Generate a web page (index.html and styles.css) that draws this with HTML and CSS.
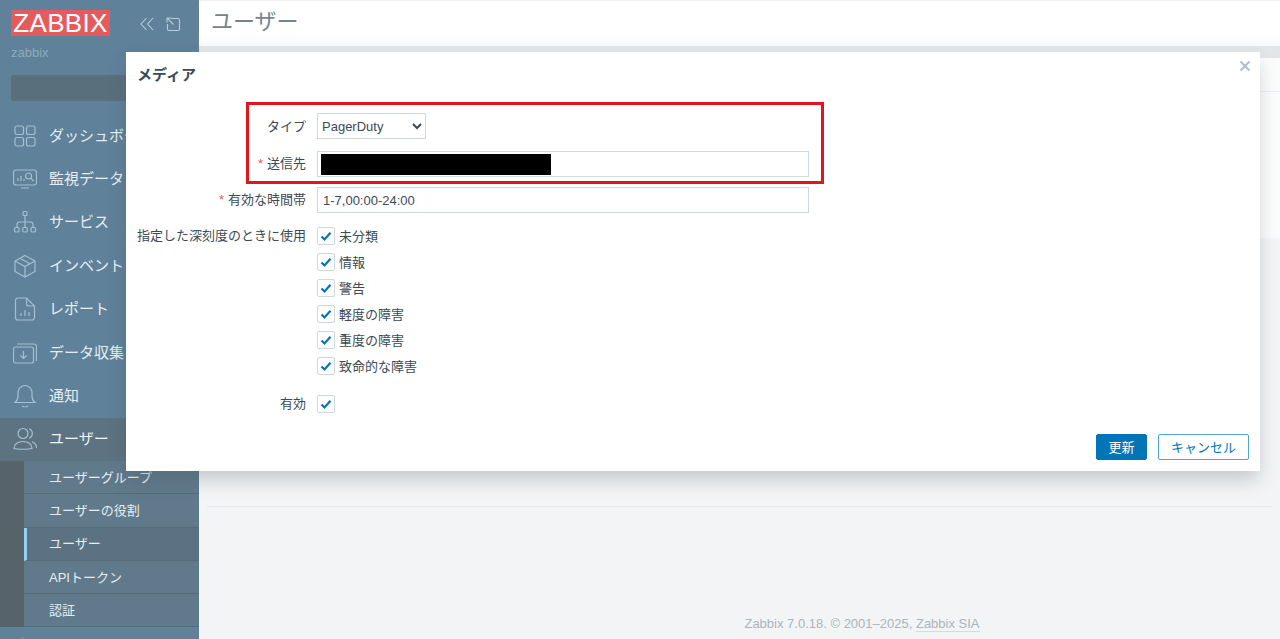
FILE: index.html
```html
<!DOCTYPE html>
<html lang="ja">
<head>
<meta charset="utf-8">
<title>ユーザー</title>
<link rel="stylesheet" href="styles.css">
</head>
<body>
<div class="app">
  <aside class="sidebar">
    <div class="brand">
      <span class="logo">ZABBIX</span>
      <div class="brand-tools">
        <svg class="tool" viewBox="0 0 16 16"><path d="M7.500 2 2 8l5.500 6M14 2 8.500 8l5.500 6"/></svg>
        <svg class="tool" viewBox="0 0 16 16"><path d="M6 2.500h7a1.500 1.500 0 0 1 1.500 1.500v9a1.500 1.500 0 0 1-1.500 1.500H4A1.500 1.500 0 0 1 2.500 13V8M2 2l6.500 6.500M2 2h4.500M2 2v4.500"/></svg>
      </div>
    </div>
    <div class="server">zabbix</div>
    <div class="search"></div>
    <nav class="menu">
      <a class="item"><svg class="ico" viewBox="0 0 24 24"><rect x="2" y="2" width="8.500" height="8.500" rx="2"/><rect x="13.500" y="2" width="8.500" height="8.500" rx="2"/><rect x="2" y="13.500" width="8.500" height="8.500" rx="2"/><rect x="13.500" y="13.500" width="8.500" height="8.500" rx="2"/></svg><span>ダッシュボード</span></a>
      <a class="item"><svg class="ico" viewBox="0 0 24 24"><rect x="0.500" y="3" width="23" height="15" rx="2.500"/><path d="M8 21h8M5 14v-3M8 14v-5M11 14v-2"/><circle cx="15.500" cy="9" r="3"/><path d="m18 11.500 2.500 2.500"/></svg><span>監視データ</span></a>
      <a class="item"><svg class="ico" viewBox="0 0 24 24"><rect x="10" y="1.500" width="4" height="4" rx="1"/><path d="M12 5.500V12M4 17v-2.500a2.500 2.500 0 0 1 2.500-2.500h11a2.500 2.500 0 0 1 2.500 2.500V17M12 12v5"/><rect x="1.500" y="17.500" width="4.500" height="4.500" rx="1"/><rect x="9.750" y="17.500" width="4.500" height="4.500" rx="1"/><rect x="18" y="17.500" width="4.500" height="4.500" rx="1"/></svg><span>サービス</span></a>
      <a class="item"><svg class="ico" viewBox="0 0 24 24"><path d="M12 1.500 22 7v10.500L12 23 2 17.500V7zM2 7l10 5.500L22 7M12 12.500V23M7 4.300l10 5.500"/></svg><span>インベントリ</span></a>
      <a class="item"><svg class="ico" viewBox="0 0 24 24"><path d="M13.500 1H5a2.500 2.500 0 0 0-2.500 2.500v17A2.500 2.500 0 0 0 5 23h14a2.500 2.500 0 0 0 2.500-2.500V9zM13.500 1v5.500A2.500 2.500 0 0 0 16 9h5.500M8 19v-3M12 19v-6M16 19v-4"/></svg><span>レポート</span></a>
      <a class="item"><svg class="ico" viewBox="0 0 24 24"><rect x="0.500" y="6" width="20" height="16" rx="2"/><path d="M4 3h17a2.500 2.500 0 0 1 2.500 2.500V20M10.500 10v7.500M7.500 14.500l3 3 3-3"/></svg><span>データ収集</span></a>
      <a class="item"><svg class="ico" viewBox="0 0 24 24"><path d="M2 18.500c2-1.500 3-3 3-6.500V8.500a7 7 0 0 1 14 0V12c0 3.500 1 5 3 6.500zM9 22c1.500 1 4.500 1 6 0"/></svg><span>通知</span></a>
      <a class="item item-open"><svg class="ico" viewBox="0 0 24 24"><circle cx="10" cy="6.500" r="5"/><path d="M1 21.500c0-4.500 4-7 9-7s9 2.500 9 7c-3 1-15 1-18 0zM16 1.800a5 5 0 0 1 0 9.400M19 14.800c2.500 1 4.500 3 4.500 6"/></svg><span>ユーザー</span></a>
      <div class="submenu">
        <a class="sub">ユーザーグループ</a>
        <a class="sub">ユーザーの役割</a>
        <a class="sub sub-active">ユーザー</a>
        <a class="sub">APIトークン</a>
        <a class="sub">認証</a>
      </div>
      <a class="item"><svg class="ico" viewBox="0 0 24 24"><circle cx="10" cy="6" r="4"/><path d="M4 22c0-5 4-7 8-7s8 2 8 7"/></svg></a>
    </nav>
  </aside>
  <main class="main">
    <header class="page-head"><h1>ユーザー</h1></header>
    <div class="band"></div>
    <section class="card"><div class="card-rule"></div></section>
    <div class="rest">
      <div class="rest-rule"></div>
      <footer class="foot">Zabbix 7.0.18. © 2001–2025, <a class="foot-link">Zabbix SIA</a></footer>
    </div>
  </main>
</div>

<div class="modal">
  <h2 class="modal-title">メディア</h2>
  <svg class="close" viewBox="0 0 12 12"><path d="M1.500 1.500l9 9M10.500 1.500l-9 9"/></svg>
  <div class="form">
    <div class="label">タイプ</div>
    <div class="ctrl first"><select class="select"><option>PagerDuty</option></select></div>
    <div class="label"><i>*</i>送信先</div>
    <div class="ctrl secret-wrap"><input class="input" type="text" value=""><span class="secret"></span></div>
    <div class="label"><i>*</i>有効な時間帯</div>
    <div class="ctrl"><input class="input" type="text" value="1-7,00:00-24:00"></div>
    <div class="label label-top">指定した深刻度のときに使用</div>
    <div class="ctrl checks">
      <div class="check-row"><span class="box"><svg viewBox="0 0 12 12"><path d="M1.500 6.500 4.500 9.500 10.500 2.800"/></svg></span>未分類</div>
      <div class="check-row"><span class="box"><svg viewBox="0 0 12 12"><path d="M1.500 6.500 4.500 9.500 10.500 2.800"/></svg></span>情報</div>
      <div class="check-row"><span class="box"><svg viewBox="0 0 12 12"><path d="M1.500 6.500 4.500 9.500 10.500 2.800"/></svg></span>警告</div>
      <div class="check-row"><span class="box"><svg viewBox="0 0 12 12"><path d="M1.500 6.500 4.500 9.500 10.500 2.800"/></svg></span>軽度の障害</div>
      <div class="check-row"><span class="box"><svg viewBox="0 0 12 12"><path d="M1.500 6.500 4.500 9.500 10.500 2.800"/></svg></span>重度の障害</div>
      <div class="check-row"><span class="box"><svg viewBox="0 0 12 12"><path d="M1.500 6.500 4.500 9.500 10.500 2.800"/></svg></span>致命的な障害</div>
    </div>
    <div class="label">有効</div>
    <div class="ctrl"><span class="box"><svg viewBox="0 0 12 12"><path d="M1.500 6.500 4.500 9.500 10.500 2.800"/></svg></span></div>
  </div>
  <div class="actions">
    <button class="btn btn-primary">更新</button>
    <button class="btn btn-alt">キャンセル</button>
  </div>
  <div class="highlight"></div>
</div>
</body>
</html>
```
FILE: styles.css
```css
* { box-sizing: border-box; }
html, body { margin: 0; height: 100%; overflow: hidden; }
body {
  font-family: "Liberation Sans", "Noto Sans CJK JP", sans-serif;
  font-size: 13px;
  color: #3c4a54;
  background: #f2f4f5;
}
.app { display: flex; height: 639px; }

/* Sidebar */
.sidebar {
  width: 199px;
  flex: none;
  background: #5f8199;
  overflow: hidden;
  color: #e6edf2;
}
.brand {
  display: flex;
  align-items: center;
  padding: 10px 0 0 11px;
  height: 36px;
}
.logo {
  width: 99px;
  height: 26px;
  background: #e45b5b;
  color: #fff;
  font-size: 26px;
  letter-spacing: 0.300px;
  line-height: 26px;
  text-align: center;
}
.brand-tools { display: flex; gap: 10px; margin-left: 29px; margin-top: 1px; }
.tool { width: 16px; height: 16px; fill: none; stroke: #b7cddc; stroke-width: 1.100; }
.server { margin: 9px 0 0 11px; height: 16px; line-height: 16px; font-size: 13px; color: #8ea9bc; }
.search {
  margin: 14px 0 0 11px;
  width: 180px;
  height: 26px;
  background: #5a6f7c;
  border: 1px solid #557080;
  border-radius: 2px;
}
.menu { margin-top: 13px; }
.item {
  display: flex;
  align-items: center;
  height: 43.400px;
  padding-left: 13px;
  gap: 12px;
  font-size: 15px;
  white-space: nowrap;
}
.item span { padding-bottom: 3px; }
.ico { width: 24px; height: 24px; flex: none; fill: none; stroke: #a3c0d3; stroke-width: 1.200; }
.item-open { background: #5d7382; color: #f2f5f7; }
.submenu { background: #566469; padding-left: 24px; }
.sub {
  display: flex;
  align-items: center;
  height: 33.250px;
  padding: 0 0 2px 25px;
  background: #607a8b;
  border-bottom: 1px solid #566a78;
  white-space: nowrap;
}
.sub-active { background: #5c7282; border-left: 3px solid #96d0f2; padding-left: 22px; }

/* Main */
.main { flex: 1; display: flex; flex-direction: column; min-width: 0; }
.page-head {
  height: 46px;
  background: linear-gradient(#fff 70%, #f8f9f9);
  border-top: 1px solid #eef0f2;
  padding-left: 12px;
}
.page-head h1 { margin: 0; font-size: 22px; font-weight: 400; line-height: 42px; color: #78848c; }
.band { height: 12px; background: #e2e6e8; }
.card { height: 180px; background: #fbfcfc; }
.card-rule { height: 1px; margin-top: 33px; background: #eceff1; }
.rest { flex: 1; display: flex; flex-direction: column; padding: 268px 8px 0; background: #f2f4f5; }
.rest-rule { height: 1px; background: #e6e9eb; }
.foot {
  margin-top: auto;
  height: 30px;
  padding-left: 245px;
  text-align: center;
  color: #aab5bc;
  line-height: 30px;
  font-size: 13px;
}
.foot-link { border-bottom: 1px solid #d5dbdf; }

/* Modal */
.modal {
  position: absolute;
  left: 126px;
  top: 52px;
  width: 1134px;
  height: 419px;
  background: #fff;
  box-shadow: 0 10px 18px -2px rgba(60, 75, 85, .26);
  padding: 12px 11px 0;
}
.modal-title { margin: 0; font-size: 15px; line-height: 22px; color: #384c5a; font-weight: 700; }
.close {
  position: absolute;
  right: 9px;
  top: 8px;
  width: 12px;
  height: 12px;
  fill: none;
  stroke: #aebfca;
  stroke-width: 2;
}
.form {
  display: grid;
  grid-template-columns: 169px 492px;
  column-gap: 11px;
  row-gap: 10px;
  margin-top: 27px;
  align-items: center;
}
.label { text-align: right; white-space: nowrap; padding-bottom: 3px; }
.first { margin-bottom: 2px; }
.label-top { align-self: start; line-height: 18px; margin-top: 4px; padding-bottom: 0; }
.label i { font-style: normal; color: #e45959; margin-right: 4px; }
.ctrl { display: flex; min-width: 0; }
.select {
  width: 109px;
  height: 26px;
  background: #fff;
  border: 1px solid #cfd8dd;
  font: inherit;
  color: #3c4a54;
  padding: 0;
  border-radius: 0;
}
.input {
  width: 492px;
  height: 26px;
  border: 1px solid #cfd8dd;
  padding: 0 5px;
  font: inherit;
  color: #3c4a54;
  outline: none;
}
.secret-wrap { position: relative; }
.secret { position: absolute; left: 4px; top: 3px; width: 230px; height: 21px; background: #000; }
.checks { flex-direction: column; gap: 8px; margin: 4px 0 8px; }
.check-row { display: flex; align-items: center; gap: 4px; height: 18px; padding-bottom: 2px; white-space: nowrap; }
.check-row .box { margin-bottom: -2px; }
.box {
  width: 18px;
  height: 18px;
  flex: none;
  background: #fff;
  border: 1px solid #cfd8dd;
  border-radius: 2px;
  display: flex;
  align-items: center;
  justify-content: center;
}
.box svg { width: 12px; height: 12px; fill: none; stroke: #0275b8; stroke-width: 2.200; }
.actions {
  position: absolute;
  right: 11px;
  bottom: 11px;
  display: flex;
  gap: 11px;
}
.btn {
  height: 26px;
  font: inherit;
  border-radius: 2px;
  padding: 0 0 2px;
}
.btn-primary { width: 51px; background: #0275b8; border: 1px solid #0275b8; color: #fff; }
.btn-alt { width: 91px; background: #fff; border: 1px solid #4fa4d5; color: #0275b8; }
.highlight {
  position: absolute;
  left: 120px;
  top: 50px;
  width: 578px;
  height: 82px;
  border: 3px solid #e2141c;
  pointer-events: none;
}
```
